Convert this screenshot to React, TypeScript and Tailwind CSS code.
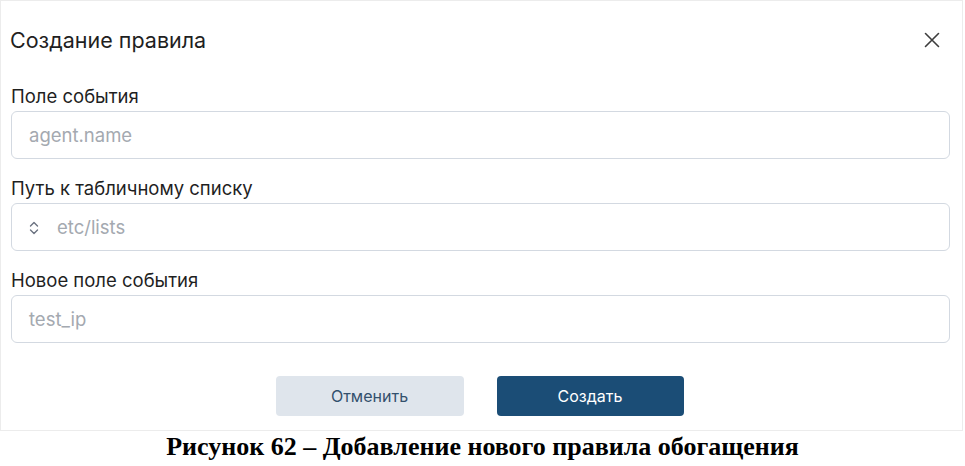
import React from "react";

const font = { fontFamily: "Inter, 'Noto Sans', sans-serif" };

function ChevronUpDown() {
  return (
    <svg width="10" height="14" viewBox="0 0 10 14" fill="none" stroke="#6b7280" strokeWidth="1.4" strokeLinecap="round" strokeLinejoin="round">
      <path d="M1.5 5 L5 1.5 L8.5 5" />
      <path d="M1.5 9 L5 12.5 L8.5 9" />
    </svg>
  );
}

export default function App() {
  return (
    <div className="w-[965px] h-[466px] bg-white" style={font}>
      <div className="w-[963px] h-[431px] border border-[#ececec] pt-[25px] pb-[14px] flex flex-col">
        <div className="flex items-center justify-between pl-[9px] pr-[22px] h-[28px]">
          <span className="text-[21.5px] text-[#1f1f1f] leading-[28px]">Создание правила</span>
          <svg width="16" height="16" viewBox="0 0 16 16" stroke="#3d3d3d" strokeWidth="1.6" strokeLinecap="round">
            <path d="M1.5 1.5 L14.5 14.5 M14.5 1.5 L1.5 14.5" />
          </svg>
        </div>
        <div className="pl-[10px] pr-[12px] mt-[30px] flex flex-col">
          <label className="text-[18.5px] leading-[24px] text-[#1f1f1f] mb-[3px]">Поле события</label>
          <div className="h-[48px] border border-[#d3d9e1] rounded-[6px] flex items-center pt-[2px] px-[17px] text-[18.5px] text-[#a4a9b0]">
            agent.name
          </div>
          <label className="text-[18.5px] leading-[24px] text-[#1f1f1f] mt-[17px] mb-[3px]">Путь к табличному списку</label>
          <div className="h-[48px] border border-[#d3d9e1] rounded-[6px] flex items-center pt-[2px] pl-[17px] text-[18.5px] text-[#a4a9b0] gap-[18px]">
            <ChevronUpDown />
            <span>etc/lists</span>
          </div>
          <label className="text-[18.5px] leading-[24px] text-[#1f1f1f] mt-[17px] mb-[3px]">Новое поле события</label>
          <div className="h-[48px] border border-[#d3d9e1] rounded-[6px] flex items-center pt-[2px] px-[17px] text-[18.5px] text-[#a4a9b0]">
            test_ip
          </div>
        </div>
        <div className="flex justify-center gap-[33px] mt-[33px] pr-[4px]">
          <button className="w-[188px] h-[40px] rounded-[4px] bg-[#dfe5ec] text-[#33506d] text-[16px]">Отменить</button>
          <button className="w-[187px] h-[40px] rounded-[4px] bg-[#1b4d76] text-white text-[16px]">Создать</button>
        </div>
      </div>
      <div className="text-center font-bold text-[26px] leading-[30px] text-black mt-[1px]" style={{ fontFamily: "'Liberation Serif', 'Times New Roman', serif" }}>
        Рисунок 62 – Добавление нового правила обогащения
      </div>
    </div>
  );
}
